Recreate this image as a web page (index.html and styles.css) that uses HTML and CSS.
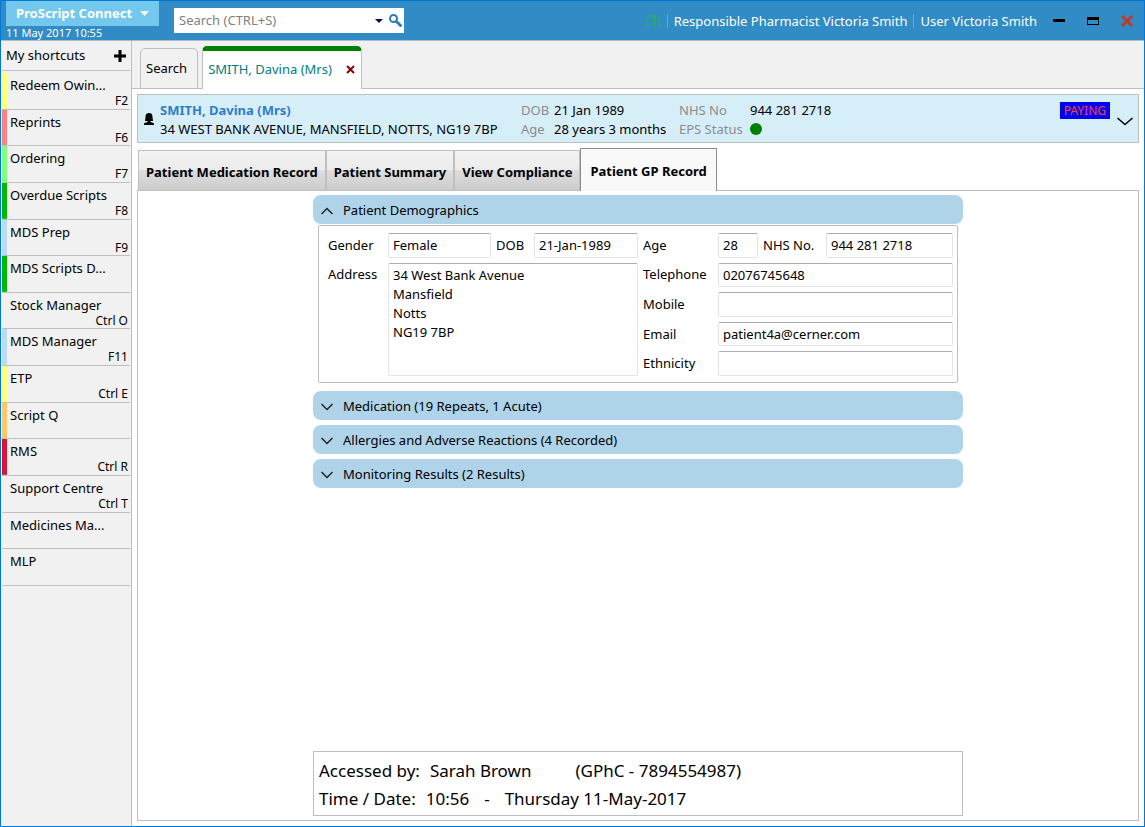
FILE: index.html
```html
<!DOCTYPE html>
<html lang="en">
<head>
  <meta charset="UTF-8" />
  <meta name="viewport" content="width=device-width, initial-scale=1.0" />
  <title>ProScript Connect</title>
  <link rel="stylesheet" href="styles.css">
</head>
<body>
  <header class="title-bar">
    <div class="brand">
      <button type="button" class="brand-menu">ProScript Connect
        <svg width="9" height="5" viewBox="0 0 9 5"><path d="M0 0h9L4.500 5z" fill="#fff"/></svg>
      </button>
      <time class="clock">11 May 2017 10:55</time>
    </div>
    <form class="search-box">
      <input type="search" class="search-input" aria-label="Search" placeholder="Search (CTRL+S)" />
      <button type="button" class="icon-button" aria-label="Search options">
        <svg width="8" height="4" viewBox="0 0 8 4"><path d="M0 0h8L4 4z" fill="#0a0a5c"/></svg>
      </button>
      <button type="submit" class="icon-button" aria-label="Go">
        <svg width="13" height="13" viewBox="0 0 13 13" fill="none" stroke="#2f7db5"><circle cx="4.500" cy="4.500" r="3.500" stroke-width="2"/><path d="M7.500 7.500l4 4" stroke-width="3" stroke-linecap="round"/></svg>
      </button>
    </form>
    <div class="session">
      <svg width="16" height="12" viewBox="0 0 16 12" fill="none" stroke="#27ae60"><path d="M1.500 2.500L3 1h10l1.500 1.500M2 3v4L.5 8.500v2H6M14 3v4l1.500 1.500v2H12" stroke-width="1"/><path d="M8 1h3v10H9V5L7 2z" fill="#27ae60" stroke="none"/></svg>
      <span class="session-item">Responsible Pharmacist Victoria Smith</span>
      <span class="session-item">User Victoria Smith</span>
    </div>
    <div class="window-buttons">
      <button type="button" class="icon-button" aria-label="Minimise">
        <svg width="12" height="12" viewBox="0 0 12 12"><path d="M0 4h12v3H0z"/></svg>
      </button>
      <button type="button" class="icon-button" aria-label="Maximise">
        <svg width="12" height="12" viewBox="0 0 12 12"><path fill-rule="evenodd" d="M0 2h12v8H0zM1 5v4h10V5z"/></svg>
      </button>
      <button type="button" class="icon-button" aria-label="Close">
        <svg width="12" height="12" viewBox="0 0 12 12" stroke="#c0392b" stroke-width="3"><path d="M1 1l10 10M11 1L1 11"/></svg>
      </button>
    </div>
  </header>

  <div class="workspace">
    <nav class="sidebar">
      <div class="sidebar-header">
        <span>My shortcuts</span>
        <button type="button" class="icon-button" aria-label="Add shortcut">
          <svg width="12" height="12" viewBox="0 0 12 12"><path d="M4.500 0h3v4.500H12v3H7.500V12h-3V7.500H0v-3h4.500z"/></svg>
        </button>
      </div>
      <ul class="shortcuts">
        <li><a href="#" class="shortcut yellow">Redeem Owin...<kbd>F2</kbd></a></li>
        <li><a href="#" class="shortcut pink">Reprints<kbd>F6</kbd></a></li>
        <li><a href="#" class="shortcut light-green">Ordering<kbd>F7</kbd></a></li>
        <li><a href="#" class="shortcut green">Overdue Scripts<kbd>F8</kbd></a></li>
        <li><a href="#" class="shortcut blue">MDS Prep<kbd>F9</kbd></a></li>
        <li><a href="#" class="shortcut green">MDS Scripts D...</a></li>
        <li><a href="#" class="shortcut">Stock Manager<kbd>Ctrl O</kbd></a></li>
        <li><a href="#" class="shortcut blue">MDS Manager<kbd>F11</kbd></a></li>
        <li><a href="#" class="shortcut yellow">ETP<kbd>Ctrl E</kbd></a></li>
        <li><a href="#" class="shortcut orange">Script Q</a></li>
        <li><a href="#" class="shortcut red">RMS<kbd>Ctrl R</kbd></a></li>
        <li><a href="#" class="shortcut">Support Centre<kbd>Ctrl T</kbd></a></li>
        <li><a href="#" class="shortcut">Medicines Ma...</a></li>
        <li><a href="#" class="shortcut">MLP</a></li>
      </ul>
    </nav>

    <main class="main">
      <div class="tabs">
        <button type="button" class="tab">Search</button>
        <div class="tab active">
          <a href="#" class="tab-link">SMITH, Davina (Mrs)</a>
          <button type="button" class="icon-button" aria-label="Close tab">
            <svg width="9" height="9" viewBox="0 0 9 9" stroke="#8b0000" stroke-width="2"><path d="M1 1l7 7M8 1L1 8"/></svg>
          </button>
        </div>
      </div>

      <div class="content">
        <section class="patient-banner">
          <svg class="avatar" width="10" height="13" viewBox="0 0 10 13"><path d="M5 0C2.500 0 1.500 1.500 1.500 4L1 8h2.500v1L.5 10C0 10.500 0 11 0 12h10c0-1 0-1.500-.5-2l-3-1V8H9l-.5-4C8.500 1.500 7.500 0 5 0z"/></svg>
          <div class="patient-name">
            <strong>SMITH, Davina (Mrs)</strong>
            <span>34 WEST BANK AVENUE, MANSFIELD, NOTTS, NG19 7BP</span>
          </div>
          <dl class="facts birth">
            <dt>DOB</dt><dd>21 Jan 1989</dd>
            <dt>Age</dt><dd>28 years 3 months</dd>
          </dl>
          <dl class="facts nhs">
            <dt>NHS No</dt><dd>944 281 2718</dd>
            <dt>EPS Status</dt><dd><span class="status-dot"></span></dd>
          </dl>
          <span class="paying">PAYING</span>
          <button type="button" class="icon-button" aria-label="Expand patient details">
            <svg width="16" height="9" viewBox="0 0 16 9" fill="none" stroke="#000" stroke-width="1.500"><path d="M.5 1L8 7.500 15.500 1"/></svg>
          </button>
        </section>

        <div class="record-tabs">
          <button type="button" class="record-tab">Patient Medication Record</button>
          <button type="button" class="record-tab">Patient Summary</button>
          <button type="button" class="record-tab">View Compliance</button>
          <button type="button" class="record-tab selected">Patient GP Record</button>
        </div>

        <section class="record">
          <div class="record-body">
            <button type="button" class="section-header">
              <svg width="12" height="8" viewBox="0 0 12 8" fill="none" stroke="#222" stroke-width="1.500"><path d="M.5 7L6 1.500 11.500 7"/></svg>
              Patient Demographics
            </button>
            <form class="demographics">
              <label for="gender">Gender</label>
              <input type="text" id="gender" value="Female" readonly />
              <label for="dob">DOB</label>
              <input type="text" id="dob" value="21-Jan-1989" readonly />
              <label for="age">Age</label>
              <input type="text" id="age" value="28" readonly />
              <label for="nhs-no">NHS No.</label>
              <input type="text" id="nhs-no" value="944 281 2718" readonly />
              <label for="address">Address</label>
              <textarea id="address" readonly>34 West Bank Avenue
Mansfield
Notts
NG19 7BP</textarea>
              <label for="telephone" class="contact">Telephone</label>
              <input type="tel" id="telephone" class="wide" value="02076745648" readonly />
              <label for="mobile" class="contact">Mobile</label>
              <input type="tel" id="mobile" class="wide" readonly />
              <label for="email" class="contact">Email</label>
              <input type="email" id="email" class="wide" value="patient4a@cerner.com" readonly />
              <label for="ethnicity" class="contact">Ethnicity</label>
              <input type="text" id="ethnicity" class="wide" readonly />
            </form>
            <div class="collapsed">
              <button type="button" class="section-header">
                <svg width="12" height="8" viewBox="0 0 12 8" fill="none" stroke="#222" stroke-width="1.500"><path d="M.5 1L6 6.500 11.500 1"/></svg>
                Medication (19 Repeats, 1 Acute)
              </button>
              <button type="button" class="section-header">
                <svg width="12" height="8" viewBox="0 0 12 8" fill="none" stroke="#222" stroke-width="1.500"><path d="M.5 1L6 6.500 11.500 1"/></svg>
                Allergies and Adverse Reactions (4 Recorded)
              </button>
              <button type="button" class="section-header">
                <svg width="12" height="8" viewBox="0 0 12 8" fill="none" stroke="#222" stroke-width="1.500"><path d="M.5 1L6 6.500 11.500 1"/></svg>
                Monitoring Results (2 Results)
              </button>
            </div>
            <footer class="access-log">
              <p><span>Accessed by:</span><span class="who">Sarah Brown</span><span>(GPhC - 7894554987)</span></p>
              <p><span>Time / Date:</span><span>10:56</span><span class="dash">-</span><span>Thursday 11-May-2017</span></p>
            </footer>
          </div>
        </section>
      </div>
    </main>
  </div>
</body>
</html>
```
FILE: styles.css
```css
* {
  box-sizing: border-box;
}

body {
  margin: 0;
  min-height: 100vh;
  display: flex;
  flex-direction: column;
  border: 1px solid #0078d7;
  background-color: #fff;
  color: #000;
  font-family: 'Noto Sans', 'Open Sans', sans-serif;
  font-size: 13px;
  line-height: 19px;
}

button,
input,
textarea {
  font: inherit;
  color: inherit;
}

button {
  border: none;
  padding: 0;
  cursor: pointer;
}

a {
  color: inherit;
  text-decoration: none;
}

svg {
  display: block;
  flex: none;
}

.icon-button {
  background: none;
}

/* Title bar */
.title-bar {
  display: flex;
  height: 40px;
  padding-right: 11px;
  background-color: #318bc5;
  border-bottom: 1px solid #b4bcc2;
  color: #fff;
}

.brand {
  width: 153px;
  margin-left: 5px;
}

.brand-menu {
  display: flex;
  align-items: center;
  justify-content: space-between;
  width: 100%;
  height: 25px;
  padding: 0 10px;
  background-color: #74c8ee;
  font-weight: bold;
}

.clock {
  display: block;
  font-size: 11px;
  line-height: 14px;
}

.search-box {
  display: flex;
  align-items: center;
  gap: 6px;
  width: 230px;
  height: 25px;
  margin: 7px 0 0 15px;
  padding-right: 2px;
  background-color: #fff;
}

.search-input {
  flex: 1;
  min-width: 0;
  padding: 0 5px;
  border: none;
  background: none;
}

.search-input::placeholder {
  color: #808080;
}

.session {
  display: flex;
  align-items: center;
  gap: 6px;
  height: 39px;
  margin-left: auto;
}

.session-item {
  padding-left: 6px;
  border-left: 1px solid #8c9daa;
  line-height: 14px;
}

.window-buttons {
  display: flex;
  align-items: center;
  gap: 22px;
  height: 39px;
  margin-left: 16px;
}

.workspace {
  display: flex;
  flex: 1;
}

/* Shortcuts */
.sidebar {
  width: 131px;
  padding: 0 1px;
  background-color: #f1f1f1;
  border-right: 1px solid #bfbfbf;
}

.sidebar-header {
  display: flex;
  align-items: center;
  justify-content: space-between;
  height: 30px;
  padding: 0 4px;
  border-bottom: 1px solid #bfbfbf;
}

.shortcuts {
  display: grid;
  grid-auto-rows: 1fr;
  height: 513px;
  margin: 2px 0 0;
  padding: 0;
  list-style: none;
}

.shortcut {
  display: flex;
  flex-direction: column;
  height: 100%;
  padding: 2px 2px 0 3px;
  border-bottom: 1px solid #bfbfbf;
  background: linear-gradient(transparent, transparent) no-repeat left / 5px 100%;
  padding-left: 8px;
  line-height: 20px;
}

.shortcut kbd {
  align-self: flex-end;
  font-family: inherit;
  font-size: 12px;
  line-height: 12px;
}

.yellow { background-image: linear-gradient(#ffff80, #ffff80); }
.pink { background-image: linear-gradient(#ff8080, #ff8080); }
.light-green { background-image: linear-gradient(#80ff80, #80ff80); }
.green { background-image: linear-gradient(#00b900, #00b900); }
.blue { background-image: linear-gradient(#b9dcf5, #b9dcf5); }
.orange { background-image: linear-gradient(#ffc864, #ffc864); }
.red { background-image: linear-gradient(#dc143c, #dc143c); }

/* Open patients */
.main {
  display: flex;
  flex-direction: column;
  flex: 1;
  min-width: 0;
}

.tabs {
  display: flex;
  align-items: flex-end;
  gap: 4px;
  height: 48px;
  padding-left: 8px;
  background-color: #f1f1f1;
  box-shadow: inset 0 -1px #bfbfbf;
}

.tab {
  height: 41px;
  padding: 0 10px 0 5px;
  border: 1px solid #bfbfbf;
  border-radius: 5px 5px 0 0;
  background-color: #f1f1f1;
}

.tab.active {
  display: flex;
  align-items: center;
  gap: 14px;
  height: 43px;
  padding-right: 6px;
  padding-bottom: 2px;
  border-top: 5px solid #008000;
  border-bottom: none;
  background-color: #fff;
}

.tab-link {
  color: #008080;
}

.content {
  display: flex;
  flex-direction: column;
  flex: 1;
  padding: 5px;
}

.patient-banner {
  display: flex;
  height: 49px;
  padding: 6px 5px 0 6px;
  background-color: #d6eef8;
  border: 1px solid #bfbfbf;
}

.avatar {
  margin-top: 12px;
}

.patient-name {
  display: flex;
  flex-direction: column;
  width: 367px;
  padding-left: 6px;
  white-space: nowrap;
}

.patient-name strong {
  color: #307cc8;
}

.facts {
  display: grid;
  grid-template-columns: 33px auto;
  grid-auto-rows: 19px;
  margin: 0;
  white-space: nowrap;
}

.facts dt {
  color: #8c8c8c;
}

.facts dd {
  margin: 0;
}

.birth {
  width: 158px;
}

.nhs {
  grid-template-columns: 69px auto;
}

.nhs dd {
  padding-left: 2px;
}

.status-dot {
  display: block;
  width: 12px;
  height: 12px;
  margin-top: 3px;
  border-radius: 50%;
  background-color: #008000;
}

.paying {
  height: 17px;
  margin: 1px 7px 0 auto;
  padding: 0 4px;
  background-color: #0000ff;
  color: #ff4500;
  font-size: 12px;
  line-height: 17px;
}

/* Record tabs */
.record-tabs {
  display: flex;
  align-items: flex-end;
  height: 47px;
  padding-left: 1px;
}

.record-tab {
  height: 40px;
  padding: 4px 7px 0;
  border: 1px solid #bfbfbf;
  border-bottom: none;
  background: linear-gradient(#f3f3f3 0, #ebebeb 50%, #dddddd 50%, #cdcdcd 100%);
  font-weight: bold;
}

.record-tab.selected {
  z-index: 1;
  height: 43px;
  margin-bottom: -1px;
  padding: 2px 9px 0;
  border-color: #8c8c8c;
  background: #f9f9f9;
}

.record {
  display: flex;
  flex: 1;
  justify-content: center;
  padding: 4px 0;
  border: 1px solid #bfbfbf;
}

.record-body {
  display: flex;
  flex-direction: column;
  width: 650px;
}

.section-header {
  display: flex;
  align-items: center;
  gap: 10px;
  width: 100%;
  height: 29px;
  padding: 2px 8px 0;
  border-radius: 8px;
  background-color: #afd3e9;
}

.demographics {
  display: grid;
  grid-template-columns: 60px 103px 43px 104px 80px 40px 68px 1fr;
  grid-template-rows: repeat(5, 1fr);
  row-gap: 5px;
  height: 158px;
  margin: 1px 5px 8px;
  padding: 7px 4px 6px 9px;
  border: 1px solid #bfbfbf;
  border-radius: 2px;
}

.demographics label {
  align-self: center;
  padding-left: 5px;
}

.demographics label[for="gender"],
.demographics label[for="address"] {
  padding-left: 0;
}

.demographics input,
.demographics textarea {
  width: 100%;
  min-width: 0;
  height: 100%;
  padding: 0 4px;
  border: 1px solid #e3e3ea;
  border-top-color: #abadb3;
  border-radius: 2px;
}

.demographics textarea {
  grid-column: 2 / 5;
  grid-row: 2 / 6;
  padding-top: 2px;
  resize: none;
}

.demographics .contact {
  grid-column: 5;
}

.demographics .wide {
  grid-column: 6 / 9;
}

.collapsed {
  display: flex;
  flex-direction: column;
  gap: 5px;
}

.access-log {
  height: 65px;
  margin-top: auto;
  padding: 5px;
  border: 1px solid #bfbfbf;
  font-size: 17px;
  line-height: 28px;
}

.access-log p {
  display: flex;
  gap: 10px;
  margin: 0;
}

.access-log .who {
  margin-right: 34px;
}

.access-log .dash {
  margin: 0 5px;
}
```
